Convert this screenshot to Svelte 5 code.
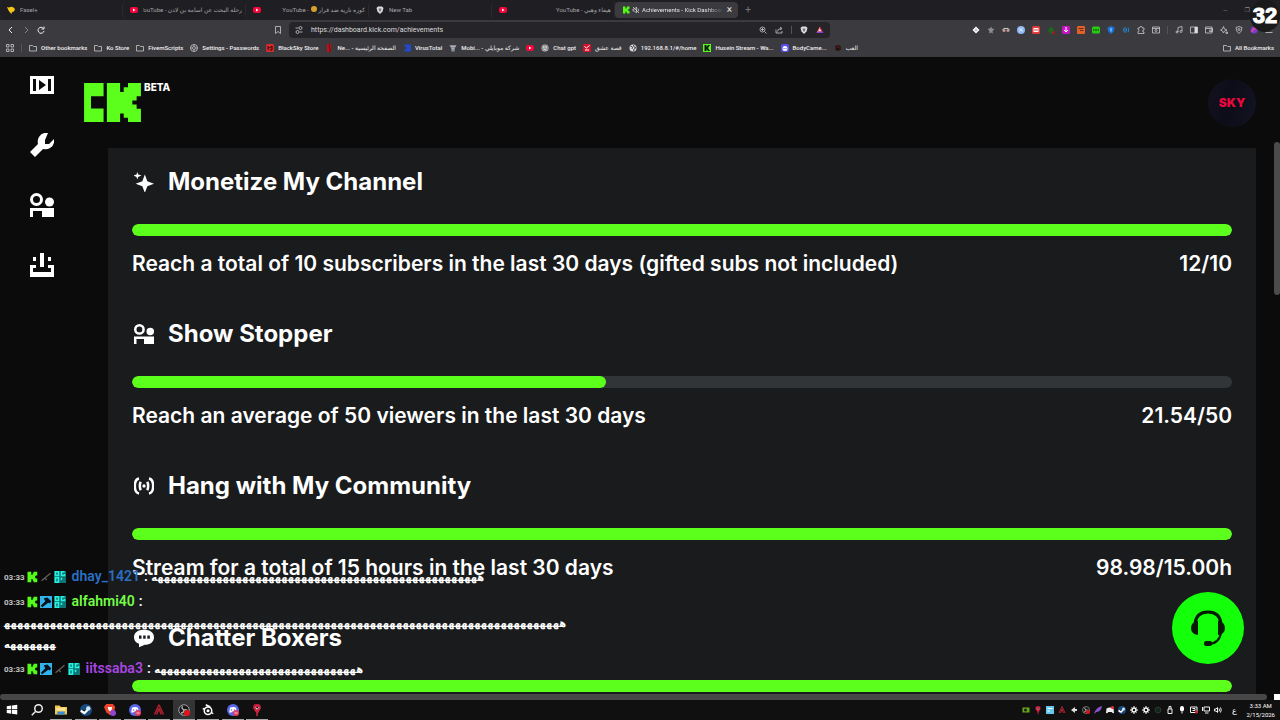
<script lang="ts">
  const kick = '<path fill="#53fc18" d="M2 1h5v4h2V3h1V1h5v5h-2v1h-1v2h1v1h2v5h-5v-2H9v-2H7v4H2z"/>';
  const discord = '<circle cx="8" cy="8" r="8" fill="#5b67e8"/><path fill="#fff" d="M4 5q4-2 8 0l1 6q-2 1-3 0l-1-1H7l-1 1q-1 1-3 0z"/><circle cx="6" cy="8" r="1" fill="#5b67e8"/><circle cx="10" cy="8" r="1" fill="#5b67e8"/>';

  const icons: Record<string, string> = {
    kick,
    folder: '<path class="ln" d="M1 3h6l2 2h6v9H1z"/>',
    youtube: '<rect y="2" width="16" height="12" rx="4" fill="#f3063c"/><path fill="#fff" d="M6 5v6l5-3z"/>',
    steam: '<circle cx="8" cy="8" r="8" fill="#174a7c"/><circle cx="11" cy="6" r="3" fill="#cfe6f7"/><path stroke="#fff" stroke-width="3" d="M1 9l5 3 4-4"/>',
    peak: '<path fill="none" stroke="#b3202f" stroke-width="2" d="M8 1L2 14M8 1l6 13M8 6l-3 8M8 6l3 8"/>',
    valorant: '<path fill="#c9213f" d="M8 0q6 0 5 6l-4 7v3H7v-4L3 6q-1-6 5-6z"/><path stroke="#fff" d="M6 4l2 3 3-3"/>',
    back: '<path class="ln2" d="M10 2L4 8l6 6"/>',
    forward: '<path class="ln2" opacity=".4" d="M6 2l6 6-6 6"/>',
    reload: '<path class="ln2" d="M13 5a6 6 0 101 5M14 1v5H9"/>',
    mark: '<path class="ln" d="M3 1h10v14l-5-4-5 4z"/>',
    tune: '<path class="ln" d="M1 4h6M9 12h6"/><circle class="ln" cx="11" cy="4" r="3"/><circle class="ln" cx="5" cy="12" r="3"/>',
    magnify: '<path class="ln" d="M11 11l4 4M7 4v6M4 7h6"/><circle class="ln" cx="7" cy="7" r="5"/>',
    share: '<path class="ln" d="M2 7v7h12v-4M5 11q0-6 8-6M10 2l4 3-4 3"/>',
    brave: '<path fill="#ddd" d="M4 1h8l3 3-2 7-5 5-5-5-2-7z"/><path fill="#777" d="M5 5h6l-1 4-2 3-2-3z"/>',
    bat: '<path fill="#e0255b" d="M8 1l7 13H1z"/><path fill="#f28a5c" d="M8 1L1 14l7-5z"/><path fill="#fff" d="M8 6l3 5H5z"/><path fill="#7b3fe4" d="M1 14h14l-4-3H5z"/>',
    bird: '<path fill="#f5c518" d="M0 2l4 1q5-3 9 0l3 3-2 5-4 1-1 4-3-3-3-4z"/>',
    mute: '<path class="ln" d="M2 6h3l4-4v12L5 10H2zM2 2l12 12M12 5q2 3 0 6"/>',
    apps: '<path class="ln" d="M1 1h5v5H1zM10 1h5v5h-5zM1 10h5v5H1zM10 10h5v5h-5z"/>',
    gear: '<circle class="ln" cx="8" cy="8" r="7"/><circle class="ln" cx="8" cy="8" r="3"/><path class="ln" d="M8 1v3M8 12v3M1 8h3M12 8h3"/>',
    blacksky: '<rect width="16" height="16" rx="3" fill="#d92b2b"/><path stroke="#2a0808" stroke-width="2" fill="none" d="M4 12V5l3 3 5-4v8H8"/>',
    netflix: '<path fill="#c40d1b" d="M4 0h8v16H4z"/><path fill="#7c0811" d="M7 0h2l3 16h-3z"/>',
    virus: '<path fill="#2349c4" d="M0 1h16v14H0l7-7z"/>',
    trophy: '<path fill="#8b8f98" d="M1 2h14l-3 6-1 7H5L4 8z"/><path stroke="#d0d3d8" d="M3 5h10M6 9h4"/>',
    gpt: '<circle cx="8" cy="8" r="7" fill="#cfcfcf"/><path fill="none" stroke="#555" d="M8 2l5 3v6l-5 3-5-3V5zM8 2v6l5 3M8 8l-5 3"/>',
    redv: '<rect width="16" height="16" rx="2" fill="#d3122c"/><path fill="none" stroke="#fff" stroke-width="2" d="M3 5l4 3 6-5M4 12h8"/>',
    globe: '<circle cx="8" cy="8" r="7" fill="#ddd"/><path fill="none" stroke="#444" stroke-width="2" d="M3 4l4 2-1 4M9 2l1 4 4 1M9 14l1-4 3-1"/>',
    kickbox: '<rect width="16" height="16" fill="#53fc18"/><path fill="#0a1a04" d="M3 2h4v4l3-4h4l-4 6 4 6h-4l-3-4v4H3z"/>',
    cam: '<rect width="16" height="16" rx="4" fill="#5a4ff0"/><circle cx="8" cy="9" r="5" fill="#fff"/><path stroke="#5a4ff0" stroke-width="2" d="M5 9h2M9 9h2"/>',
    dark: '<circle cx="8" cy="8" r="6" fill="#2b1717"/><path stroke="#b33" d="M5 9l3-4 3 4"/>',
    diamond: '<path fill="#fff" d="M8 1l7 7-7 7-7-7z"/><path stroke="#777" d="M5 8h6M8 5v6"/>',
    star: '<path fill="#8d8d8d" d="M8 1l2 4 5 1-4 4 1 5-4-2-4 2 1-5-4-4 5-1z"/>',
    glasses: '<path fill="none" stroke="#ccc" stroke-width="2" d="M1 8q2-5 7-3 5-2 7 3"/><circle cx="4" cy="9" r="3" fill="#b99"/><circle cx="12" cy="9" r="3" fill="#b99"/>',
    ball: '<circle cx="8" cy="8" r="8" fill="#8fb8f4"/><path stroke="#e4efff" stroke-width="2" fill="none" d="M4 5l8 6M5 11l6-7"/>',
    redplay: '<rect width="16" height="16" rx="3" fill="#e33b3b"/><path fill="#fff" d="M3 4h10v8H3z"/><path fill="#e33b3b" d="M5 6h2v4H5zM9 6h2v4H9z"/>',
    tree: '<path fill="#166f1c" d="M8 1l7 9-5 1v4H6v-4H1z"/><circle cx="13" cy="13" r="3" fill="#b31717"/>',
    down: '<rect width="16" height="16" rx="3" fill="#c414c4"/><path stroke="#fff" stroke-width="2" fill="none" d="M8 2v10M4 8l4 4 4-4"/>',
    orange: '<rect width="16" height="16" rx="2" fill="#e2602a"/><path stroke="#6b2b12" stroke-width="2" d="M3 5h10M6 9h7"/>',
    green: '<rect y="1" width="16" height="14" rx="3" fill="#28c914"/><path stroke="#083d05" stroke-width="2" fill="none" d="M2 8h3M6 8h4M11 8h3"/>',
    shield: '<path fill="#1a73d9" d="M8 0l7 3q0 9-7 13Q1 12 1 3z"/><path fill="#bfe0ff" d="M7 4h2v7H7z"/>',
    wave: '<path fill="none" stroke="#2184cf" stroke-width="2" d="M3 5v6M6 2v12M9 5v6M12 3q3 5 0 10"/>',
    puzzle: '<path class="ln" d="M2 4h3q0-3 3-3t3 3h3v4q-3 0-3 2t3 2v3H2v-4q2 0 2-2T2 7z"/>',
    pip: '<path class="ln" d="M1 2h14v12H1zM1 5h14"/><circle class="ln" cx="8" cy="9" r="2"/>',
    music: '<path class="ln" d="M6 12V3l8-2v9"/><circle class="ln" cx="4" cy="12" r="2"/><circle class="ln" cx="12" cy="11" r="2"/>',
    panel: '<path class="ln" d="M1 2h14v12H1z"/><path fill="#ddd" d="M9 2h6v12H9z"/>',
    wallet: '<path class="ln" d="M1 2h13v12H1zM1 5h14v6H9V8h6"/>',
    leo: '<path class="ln" d="M7 1l2 5 5 2-5 2-2 4-2-4-4-2 4-2zM12 12h3v3h-3z"/>',
    vpn: '<path class="ln" d="M8 1l6 2q0 8-6 12Q2 11 2 3z"/><circle class="ln" cx="8" cy="7" r="2"/>',
    orb: '<circle cx="8" cy="8" r="7" fill="#7a3bd1"/><path stroke="#f0468a" stroke-width="3" fill="none" d="M3 12Q8 2 14 5"/>',
    menu: '<path class="ln" d="M1 3h14M1 8h14M1 13h14"/>',
    win: '<path fill="#fff" d="M1 3l6-1v5H1zM8 2l7-1v6H8zM1 8h6v5l-6-1zM8 8h7v6l-7-1z"/>',
    search: '<circle class="ln2" cx="10" cy="6" r="5"/><path class="ln2" d="M6 10l-5 5"/>',
    files: '<path fill="#f3c74b" d="M0 2h6l2 2h8v10H0z"/><path fill="#fbe497" d="M2 5h12v4H2z"/><path fill="#3b8ad8" d="M3 10h10v4H3z"/>',
    brave2: '<path fill="#f0432a" d="M3 0h9l3 4-2 7-5 4-5-4-3-7z"/><path fill="#fff" d="M5 4h6l-1 4-2 2-2-2z"/><circle cx="12" cy="12" r="4" fill="#9145c9"/>',
    discord: discord + '<circle cx="12" cy="12" r="4" fill="#e63a5e"/><path stroke="#fff" d="M10 12h4"/>',
    obs: '<circle cx="8" cy="8" r="7" fill="#151515" stroke="#c9c9c9"/><path fill="none" stroke="#aaa" stroke-width="2" d="M8 8q-4-2-2-5M8 8q4-1 5 2M8 8q0 4-4 4"/><circle cx="12" cy="12" r="4" fill="#e5101c"/>',
    steelseries: '<circle cx="8" cy="9" r="5" fill="none" stroke="#fff" stroke-width="2"/><circle cx="8" cy="9" r="2" fill="#fff"/><path stroke="#fff" stroke-width="2" d="M5 1l6 3M1 6l3 1M12 11l3 2"/>',
    cog: '<circle cx="8" cy="8" r="4" fill="none" stroke="#fff" stroke-width="3"/><path stroke="#fff" stroke-width="2" d="M8 0v3M8 13v3M0 8h3M13 8h3M3 3l2 2M11 11l2 2M13 3l-2 2M3 13l2-2"/>',
    nvidia: '<path fill="#68a618" d="M1 3h14v10H1z"/><circle cx="7" cy="8" r="3" fill="#122" />',
    blue: '<path fill="#63c7ee" d="M0 0h16v16H0z"/><path stroke="#fff" stroke-width="2" d="M3 5h10M3 10h5"/>',
    knob: '<path fill="#ddd" d="M2 8l8-6v4h4v4h-4v4z"/>',
    feather: '<path fill="#8852c7" d="M0 16Q3 3 16 0q-1 11-11 12z"/>',
    clyde: '<path fill="#eee" d="M1 5q7-4 14 0l1 9q-3 1-5-2H5q-2 3-5 2z"/><circle cx="13" cy="3" r="3" fill="#e33"/>',
    ring: '<circle cx="8" cy="8" r="6" fill="#14251b" stroke="#395846"/>',
    usb: '<path class="ln2" d="M4 6h8v9H4zM6 6V1h4v5"/>',
    mic: '<rect x="4" width="8" height="11" rx="4" fill="#fff"/><path class="ln2" d="M8 11v4"/>',
    cast: '<path class="ln2" d="M1 2h13v11H1zM5 5h5v4H5"/><circle cx="13" cy="12" r="3" fill="#d22"/>',
    net: '<path class="ln2" d="M4 2h11v8H4zM1 2v8M6 14h7"/>',
    sound: '<path class="ln2" d="M1 6h3l3-3v10l-3-3H1zM10 5q2 3 0 6M13 3q3 5 0 10"/>',
    gun: '<path stroke="#625a58" stroke-width="2" fill="none" d="M2 13L14 3M6 9l3 3"/>',
    hammer: '<rect width="16" height="16" fill="#2fb5ec"/><path fill="#07131c" d="M5 3l5-1 5 5-2 3-2-1-8 6-2-2 6-6z"/>',
    og: '<rect width="16" height="16" fill="#0e7678"/><path stroke="#27f2de" stroke-width="2" fill="none" d="M2 1h4v5H2zM14 1h-4v5h4V4M2 9h4v6H2zM10 9v3"/>'
  };

  // 24px artwork used by the dashboard itself
  const art: Record<string, string> = {
    people: '<g fill="currentColor"><path fill-rule="evenodd" d="M6.5 0a6.500 6.500 0 110 13 6.500 6.500 0 010-13zm0 3a3.500 3.500 0 100 7 3.500 3.500 0 000-7z"/><circle cx="19.5" cy="9" r="4.5"/><path d="M0 15h24v9H12v-6H3v6H0z"/></g>',
    player: '<path fill="currentColor" fill-rule="evenodd" d="M0 3h24v18H0zm3 3v12h3V6zm6 1v10l7-5zm9-1v12h3V6z"/>',
    wrench: '<path fill="currentColor" d="M18 0q-6-1-9 4-2 3-1 7L0 19l5 5 8-8q4 1 7-1 5-3 4-9l-5 5h-4V7z"/>',
    stream: '<path fill="currentColor" d="M10 0h4v14h-4zM3 4h3v4H3zM18 4h3v4h-3zM0 12h6v3H3v4h18v-4h-3v-3h6v12H0z"/>',
    sparkle: '<path fill="currentColor" d="M13 3l3 8 8 3-8 3-3 8-3-8-8-3 8-3zM4 0l1 3 4 1-4 2-1 3-1-3-4-2 4-1z"/>',
    live: '<g fill="none" stroke="currentColor" stroke-width="3"><path d="M6 3Q1 4 1 12t5 9M18 3q5 1 5 9t-5 9M8 7Q6 12 8 17M16 7q2 5 0 10"/></g><circle cx="12" cy="12" r="2" fill="currentColor"/>',
    chat: '<path fill="currentColor" fill-rule="evenodd" d="M12 2c7 0 12 3 12 9s-5 9-11 9l-7 3v-4c-4-2-6-4-6-8 0-6 5-9 12-9zM6 9v4h3V9zm5 0v4h3V9zm5 0v4h3V9z"/>'
  };

  const tabs = [
    { icon: 'bird', title: 'Fasel+' },
    { icon: 'youtube', title: 'رحلة البحث عن اسامة بن لادن - YouTube', rtl: true },
    { icon: 'youtube', title: 'كوره نارية ضد فرار', emoji: true, rtl: true },
    { icon: 'brave', title: 'New Tab' },
    { icon: 'youtube', title: 'هيفاء وهبي - YouTube', rtl: true },
    { icon: 'kick', title: 'Achievements - Kick Dashboard', active: true }
  ];

  const bookmarks = [
    ['folder', 'Other bookmarks'], ['folder', 'Ko Store'], ['folder', 'FivemScripts'],
    ['gear', 'Settings - Passwords'], ['blacksky', 'BlackSky Store'], ['netflix', 'Ne... - الصفحة الرئيسية'],
    ['virus', 'VirusTotal'], ['trophy', 'Mobi... - شركة موبايلي'], ['youtube', ''], ['gpt', 'Chat gpt'],
    ['redv', 'قصة عشق'], ['globe', '192.168.8.1/#/home'], ['kickbox', 'Husein Stream - Wa...'],
    ['cam', 'BodyCame...'], ['dark', 'العب']
  ];

  const extensions = ['diamond', 'star', 'glasses', 'ball', 'redplay', 'tree', 'down', 'orange', 'green', 'shield', 'wave', 'puzzle', 'pip'];
  const tools = ['music', 'panel', 'wallet', 'leo', 'vpn', 'orb', 'menu'];
  const nav = ['player', 'wrench', 'people', 'stream'];

  const achievements = [
    { icon: 'sparkle', title: 'Monetize My Channel', goal: 'Reach a total of 10 subscribers in the last 30 days (gifted subs not included)', value: 12, max: 10, label: '12/10' },
    { icon: 'people', title: 'Show Stopper', goal: 'Reach an average of 50 viewers in the last 30 days', value: 21.54, max: 50, label: '21.54/50' },
    { icon: 'live', title: 'Hang with My Community', goal: 'Stream for a total of 15 hours in the last 30 days', value: 98.98, max: 15, label: '98.98/15.00h' },
    { icon: 'chat', title: 'Chatter Boxers', goal: '', value: 1, max: 1, label: '' }
  ];

  const messages = [
    { user: 'dhay_1421', color: '#2a6fc4', badges: ['kick', 'gun', 'og'], text: 'ه'.repeat(51) },
    { user: 'alfahmi40', color: '#75fd46', badges: ['kick', 'hammer', 'og'], text: 'ه'.repeat(94) },
    { user: 'iitssaba3', color: '#a846e0', badges: ['kick', 'hammer', 'gun', 'og'], text: 'ه'.repeat(32) }
  ];

  const apps = ['win', 'search', 'files', 'steam', 'brave2', 'discord', 'peak', 'obs', 'steelseries', 'discord', 'valorant'];
  const tray = ['nvidia', 'valorant', 'blue', 'peak', 'knob', 'obs', 'feather', 'clyde', 'steam', 'cog', 'cog', 'ring', 'usb', 'mic', 'cast', 'net', 'sound'];

  let url = $state('https://dashboard.kick.com/achievements');
</script>

{#snippet icon(name: string)}
  <svg class="icon" viewBox="0 0 16 16" aria-hidden="true">{@html icons[name]}</svg>
{/snippet}

{#snippet glyph(name: string)}
  <svg class="glyph" viewBox="0 0 24 24" aria-hidden="true">{@html art[name]}</svg>
{/snippet}

<div class="screen">
  <div class="tabs">
    {#each tabs as tab}
      <button class="tab" class:active={tab.active}>
        {@render icon(tab.icon)}
        {#if tab.active}{@render icon('mute')}{/if}
        <span class="tab-title" dir={tab.rtl ? 'rtl' : 'ltr'}>
          {tab.title}{#if tab.emoji}<i class="face"></i> - YouTube{/if}
        </span>
        {#if tab.active}<span class="close">×</span>{/if}
      </button>
    {/each}
    <button class="new-tab" aria-label="New tab">+</button>
    <div class="window-buttons"><span>—</span><span>❐</span></div>
  </div>

  <div class="toolbar">
    <div class="history">
      {#each ['back', 'forward', 'reload'] as name}
        <button aria-label={name}>{@render icon(name)}</button>
      {/each}
    </div>
    <div class="address">
      <button aria-label="Bookmark">{@render icon('mark')}</button>
      <div class="url-box">
        {@render icon('tune')}
        <input aria-label="Address" bind:value={url} />
        {@render icon('magnify')}
        {@render icon('share')}
        <i class="divider"></i>
        {@render icon('brave')}
        {@render icon('bat')}
      </div>
    </div>
    <div class="extensions">
      {#each extensions as name}
        <button aria-label={name}>{@render icon(name)}</button>
      {/each}
      <i class="divider"></i>
      {#each tools as name}
        <button aria-label={name}>{@render icon(name)}</button>
      {/each}
    </div>
  </div>

  <div class="bookmarks">
    {@render icon('apps')}
    <i class="divider"></i>
    {#each bookmarks as [name, title]}
      <a href="#top">{@render icon(name)}{#if title}<span>{title}</span>{/if}</a>
    {/each}
    <a href="#all" class="all">{@render icon('folder')}<span>All Bookmarks</span></a>
  </div>

  <div class="viewport">
    <nav>
      {#each nav as name}
        <a href="#{name}" aria-label={name}>{@render glyph(name)}</a>
      {/each}
    </nav>

    <main>
      <header>
        <a class="logo" href="#home" aria-label="Kick">
          <svg viewBox="0 0 172 118"><path d="M0 0H59V40H21V77H59V118H0zM69 0H109V27H120V13H133V0H172V40H159V53H146V65H159V78H172V118H133V105H120V92H109V118H69z" /></svg>
          <sup>BETA</sup>
        </a>
        <button class="avatar">SKY</button>
      </header>

      <div class="card">
        {#each achievements as item}
          <section>
            <h2>{@render glyph(item.icon)}{item.title}</h2>
            <div class="track">
              <div class="fill" style:width="{Math.min(100, (item.value / item.max) * 100)}%"></div>
            </div>
            <p><span>{item.goal}</span><span>{item.label}</span></p>
          </section>
        {/each}
      </div>
    </main>

    <div class="scroll-y"><div class="thumb"></div></div>

    <button class="support" aria-label="Support">
      <svg viewBox="0 0 36 36">
        <path fill="none" stroke="#061a04" stroke-width="3" d="M5 14Q6 2 18 2t13 12" />
        <path fill="#061a04" d="M8 11v14Q1 24 1 18t7-7zM28 11v14q7-1 7-7t-7-7z" />
        <path fill="none" stroke="#061a04" stroke-width="2" d="M31 23q-2 11-13 11" />
        <rect x="14" y="31" width="8" height="5" rx="2" fill="#061a04" />
      </svg>
    </button>
  </div>

  <div class="scroll-x"><div class="thumb"></div><div class="corner"></div></div>

  <footer>
    <div class="apps">
      {#each apps as name, i}
        <button class:open={i > 1} class:focused={name === 'obs'} aria-label={name}>{@render icon(name)}</button>
      {/each}
    </div>
    <div class="tray">
      {#each tray as name}
        {@render icon(name)}
      {/each}
      <span class="lang">ع</span>
      <div class="clock"><span>3:33 AM</span><span>2/15/2026</span></div>
    </div>
  </footer>

  <div class="chat">
    {#each messages as msg}
      <div class="message">
        <time>03:33</time>
        {#each msg.badges as name}{@render icon(name)}{/each}
        <b style:color={msg.color}>{msg.user}</b><b class="colon">:</b>
        <bdi>{msg.text}</bdi>
      </div>
    {/each}
  </div>

  <div class="fps">32</div>
</div>

<style>
  :global(body) {
    margin: 0;
    background: #0b0b0b;
    color: #fff;
    font-family: Inter, 'DejaVu Sans', sans-serif;
  }

  .screen {
    position: relative;
    display: flex;
    flex-direction: column;
    height: 100vh;
    overflow: hidden;
  }

  button {
    display: flex;
    align-items: center;
    justify-content: center;
    padding: 0;
    border: 0;
    background: none;
    color: inherit;
    font: inherit;
    cursor: pointer;
  }
  a { color: inherit; text-decoration: none; }

  .icon { width: 8px; height: 8px; flex: none; }
  .icon :global(.ln) { fill: none; stroke: #d2d2d2; stroke-width: 1.5; }
  .icon :global(.ln2) { fill: none; stroke: #f0f0f0; stroke-width: 2; }
  .glyph { width: 24px; height: 24px; flex: none; display: block; }
  .divider { width: 1px; height: 8px; background: #555; flex: none; }

  .tabs, .toolbar, .bookmarks {
    display: flex;
    align-items: center;
    flex: none;
    font-family: Roboto, 'DejaVu Sans', sans-serif;
    font-size: 6px;
    line-height: 10px;
    white-space: nowrap;
  }

  .tabs { height: 20px; background: #1f1e23; color: #a5a5a8; }
  .tab {
    flex: 0 1 123px;
    min-width: 0;
    height: 16px;
    gap: 5px;
    padding: 0 4px 0 7px;
    box-sizing: border-box;
    border-radius: 4px;
    box-shadow: -1px 0 0 #2b2a2f;
  }
  .tab.active { background: #3b3a3e; color: #e4e4e4; gap: 2px; }
  .tab-title { flex: 1; overflow: hidden; text-align: start; }
  .active .tab-title { mask-image: linear-gradient(90deg, #000 80%, transparent); }
  .face {
    display: inline-block;
    width: 6px;
    height: 6px;
    margin: 0 1px;
    border-radius: 50%;
    background: #d6a22c;
  }
  .close { font-size: 10px; padding: 0 2px; }
  .new-tab { width: 20px; font-size: 10px; color: #77777a; }
  .window-buttons { display: flex; gap: 17px; margin-left: auto; padding-right: 30px; color: #88888b; }

  .toolbar { height: 20px; background: #3b3a3e; color: #e0e0e0; }
  .history { flex: 267 1 0; display: flex; gap: 7px; padding-left: 7px; box-sizing: border-box; }
  .address { flex: 556 1 0; display: flex; align-items: center; gap: 7px; }
  .extensions {
    flex: 443 1 0;
    display: flex;
    align-items: center;
    justify-content: flex-end;
    gap: 7px;
    padding-right: 7px;
    box-sizing: border-box;
  }
  .url-box {
    flex: 1;
    display: flex;
    align-items: center;
    gap: 8px;
    height: 16px;
    padding: 0 6px;
    border-radius: 4px;
    background: #252429;
  }
  .url-box input {
    flex: 1;
    min-width: 0;
    padding: 0;
    border: 0;
    outline: 0;
    background: none;
    color: #dcdcdc;
    font: 7px Roboto, sans-serif;
  }

  .bookmarks { height: 17px; gap: 7px; padding: 0 6px 2px; box-sizing: border-box; background: #3b3a3e; color: #f0f0f0; font-weight: 500; }
  .bookmarks a { display: flex; align-items: center; gap: 4px; }
  .bookmarks a.all { margin-left: auto; }

  .viewport { position: relative; flex: 1; min-height: 0; display: flex; overflow: hidden; }
  nav { width: 84px; flex: none; display: flex; flex-direction: column; align-items: center; gap: 36px; padding-top: 16px; }

  main { flex: 1; min-width: 0; }
  header { display: flex; align-items: center; justify-content: space-between; height: 91px; padding-right: 18px; }
  .logo { display: flex; gap: 3px; }
  .logo svg { width: 57px; height: 39px; fill: #5cff1c; }
  .logo sup { font-size: 10px; line-height: 8px; font-weight: 800; }
  .avatar {
    width: 48px;
    height: 48px;
    border-radius: 50%;
    background: linear-gradient(100deg, #14111f, #0c0d18 45%, #131322);
    color: #e8083c;
    font-size: 12px;
    font-weight: 900;
  }

  .card { margin: 0 18px 0 24px; padding: 16px 24px; background: #191b1c; }
  h2 { display: flex; align-items: center; gap: 12px; margin: 0 0 24px; font-size: 24px; line-height: 36px; font-weight: 700; }
  h2 .glyph { padding: 2px; box-sizing: border-box; }
  .track { height: 12px; border-radius: 6px; background: #323538; overflow: hidden; }
  .fill { height: 100%; border-radius: 6px; background: #5cff1c; }
  .card p {
    display: flex;
    justify-content: space-between;
    min-height: 32px;
    margin: 12px 0 36px;
    font-size: 21px;
    line-height: 32px;
    font-weight: 600;
  }

  .scroll-y { width: 6px; flex: none; padding-top: 85px; }
  .scroll-y .thumb { height: 153px; border-radius: 3px; background: #4b4b4b; }
  .scroll-x { display: flex; justify-content: space-between; flex: none; height: 6px; }
  .scroll-x .thumb { width: 99%; border-radius: 3px; background: #474747; }
  .corner { width: 6px; background: #fff; }

  .support {
    position: absolute;
    right: 36px;
    bottom: 30px;
    width: 72px;
    height: 72px;
    border-radius: 50%;
    background: #14ff0a;
  }
  .support svg { width: 36px; height: 36px; }

  footer { display: flex; justify-content: space-between; flex: none; height: 20px; background: #101010; }
  .apps { display: flex; justify-content: space-between; width: 267px; padding-left: 1px; }
  .apps button { width: 22px; border-bottom: 1px solid transparent; }
  .apps .icon { width: 12px; height: 12px; }
  .apps .open { border-color: #a9a9a9; }
  .apps .focused { background: #343434; }
  .tray { display: flex; align-items: center; gap: 4px; padding-right: 5px; }
  .lang { width: 16px; text-align: center; font-size: 8px; }
  .clock { display: flex; flex-direction: column; align-items: center; font: 6px/9px Roboto, sans-serif; }

  .chat {
    position: absolute;
    left: 4px;
    bottom: 41px;
    width: 568px;
    display: flex;
    flex-direction: column;
    gap: 4px;
    font-family: Roboto, 'DejaVu Sans', sans-serif;
    font-size: 14px;
    line-height: 21px;
    overflow-wrap: anywhere;
  }
  .message .icon { width: 12px; height: 12px; margin-right: 2px; vertical-align: -2px; }
  .message time + .icon { margin-left: -2px; }
  .message b { font-weight: 600; }
  .message .colon { margin-left: 4px; }
  .message bdi { font-family: 'DejaVu Sans Condensed', 'DejaVu Sans', sans-serif; font-size: 11px; line-height: 16px; font-weight: 700; }
  time { font-size: 8px; line-height: 16px; font-weight: 700; color: #c4c4c4; vertical-align: 1px; }

  .fps {
    position: absolute;
    top: 0;
    right: 0;
    width: 30px;
    height: 32px;
    border-radius: 50%;
    background: #1a1a1a;
    font-family: 'Liberation Sans', sans-serif;
    font-size: 22px;
    line-height: 32px;
    font-weight: 700;
    text-align: center;
    -webkit-text-stroke: 1px #fff;
  }
</style>
